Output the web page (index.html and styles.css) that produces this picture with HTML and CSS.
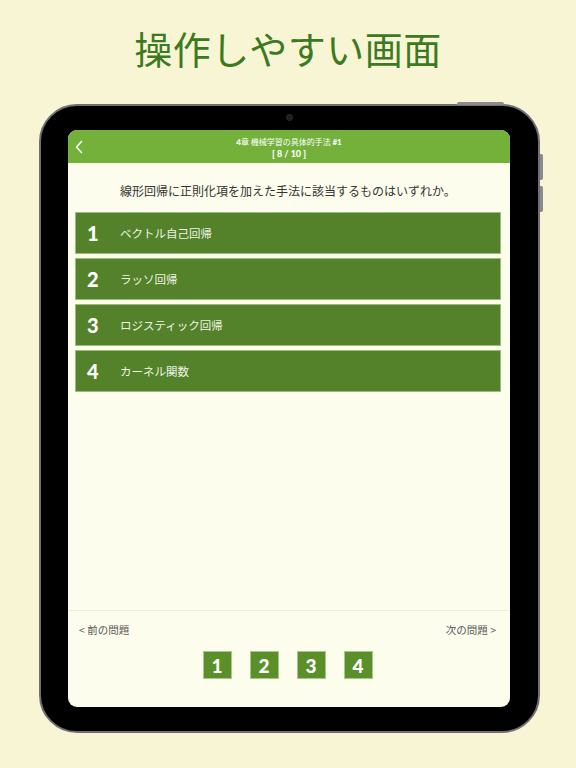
FILE: index.html
```html
<!DOCTYPE html>
<html lang="ja">
<head>
<meta charset="utf-8">
<link rel="stylesheet" href="styles.css">
</head>
<body>
<h1 class="headline">操作しやすい画面</h1>
<div class="tablet">
  <span class="camera"></span>
  <span class="btn-top"></span>
  <span class="btn-side btn-side-1"></span>
  <span class="btn-side btn-side-2"></span>
  <div class="screen">
    <header class="bar">
      <svg class="back" width="10" height="14" viewBox="0 0 10 14"><path d="M7.5 1.5 L2.5 7 L7.5 12.5" fill="none" stroke="#fff" stroke-width="1.6" stroke-linecap="round" stroke-linejoin="round"/></svg>
      <div class="bar-title">
        <div class="bar-line1"><b>4</b>章 機械学習の具体的手法 <b>#1</b></div>
        <div class="bar-line2">[ 8 / 10 ]</div>
      </div>
    </header>
    <main class="main">
      <p class="question">線形回帰に正則化項を加えた手法に該当するものはいずれか。</p>
      <ul class="options">
        <li class="option"><span class="num">1</span><span class="label">ベクトル自己回帰</span></li>
        <li class="option"><span class="num">2</span><span class="label">ラッソ回帰</span></li>
        <li class="option"><span class="num">3</span><span class="label">ロジスティック回帰</span></li>
        <li class="option"><span class="num">4</span><span class="label">カーネル関数</span></li>
      </ul>
    </main>
    <footer class="foot">
      <div class="nav">
        <span>&lt; 前の問題</span>
        <span>次の問題 &gt;</span>
      </div>
      <div class="answers">
        <span class="ans">1</span>
        <span class="ans">2</span>
        <span class="ans">3</span>
        <span class="ans">4</span>
      </div>
    </footer>
  </div>
</div>
</body>
</html>
```

FILE: styles.css
```css
* { box-sizing: border-box; }
html, body { margin: 0; padding: 0; }
body {
  width: 576px;
  height: 768px;
  background: #f8f5d4;
  font-family: "Noto Sans CJK JP", "Noto Sans", sans-serif;
  overflow: hidden;
}
.headline {
  margin: 0;
  height: 104px;
  padding-top: 22px;
  text-align: center;
  font-size: 38px;
  line-height: 52px;
  font-weight: 400;
  color: #3b7a20;
  letter-spacing: 0.5px;
}
.tablet {
  position: relative;
  margin-left: 39px;
  width: 501px;
  height: 629px;
  background: #000;
  border: 2px solid #6e6e74;
  border-radius: 38px;
  padding: 24px 28px 24px 27px;
}
.camera {
  position: absolute;
  left: 245px;
  top: 8px;
  width: 7px;
  height: 7px;
  border-radius: 50%;
  background: #1c1c22;
  border: 1px solid #2e2e38;
}
.btn-top {
  position: absolute;
  right: 34px;
  top: -4px;
  width: 47px;
  height: 3px;
  border-radius: 2px 2px 0 0;
  background: #8a8a90;
}
.btn-side {
  position: absolute;
  right: -5px;
  width: 3px;
  height: 26px;
  border-radius: 0 2px 2px 0;
  background: #8a8a90;
}
.btn-side-1 { top: 48px; }
.btn-side-2 { top: 80px; }
.screen {
  width: 442px;
  height: 577px;
  border-radius: 9px;
  overflow: hidden;
  background: #fdfdee;
  display: flex;
  flex-direction: column;
}
.bar {
  position: relative;
  height: 33px;
  flex: none;
  background: #73b13b;
  display: flex;
  align-items: center;
  justify-content: center;
  color: #fff;
}
.back {
  position: absolute;
  left: 6px;
  top: 10px;
}
.bar-title {
  text-align: center;
  font-size: 8px;
  line-height: 11px;
  padding-top: 1px;
}
.bar-title b { font-family: "Lato", "Noto Sans", sans-serif; font-weight: 900; }
.bar-line2 {
  font-family: "Lato", "Noto Sans", sans-serif;
  font-weight: 900;
  font-size: 9px;
}
.main {
  flex: 1;
  padding: 0 9px 0 7px;
}
.question {
  margin: 19px 0 0;
  text-align: center;
  font-size: 12px;
  line-height: 18px;
  color: #333;
}
.options {
  list-style: none;
  margin: 12px 0 0;
  padding: 0;
  display: flex;
  flex-direction: column;
  gap: 4px;
}
.option {
  height: 42px;
  background: #53822a;
  border: 1px solid #9cbd7d;
  display: flex;
  align-items: center;
  color: #fff;
}
.num {
  width: 44px;
  padding-left: 11px;
  font-family: "Lato", "Noto Sans", sans-serif;
  font-weight: 900;
  font-size: 20px;
}
.label {
  font-size: 11.5px;
  color: #eef2e4;
}
.foot {
  height: 97px;
  flex: none;
  border-top: 1px solid #ecece0;
  padding: 11px 14px 0 11px;
}
.nav {
  display: flex;
  justify-content: space-between;
  font-size: 10.5px;
  line-height: 16px;
  color: #555;
}
.answers {
  margin-top: 13px;
  display: flex;
  justify-content: center;
  gap: 18px;
}
.ans {
  width: 29px;
  height: 28px;
  background: #5a8f2a;
  border: 1px solid #a9c88b;
  color: #fff;
  display: flex;
  align-items: center;
  justify-content: center;
  font-family: "Lato", "Noto Sans", sans-serif;
  font-weight: 900;
  font-size: 19px;
}
```
